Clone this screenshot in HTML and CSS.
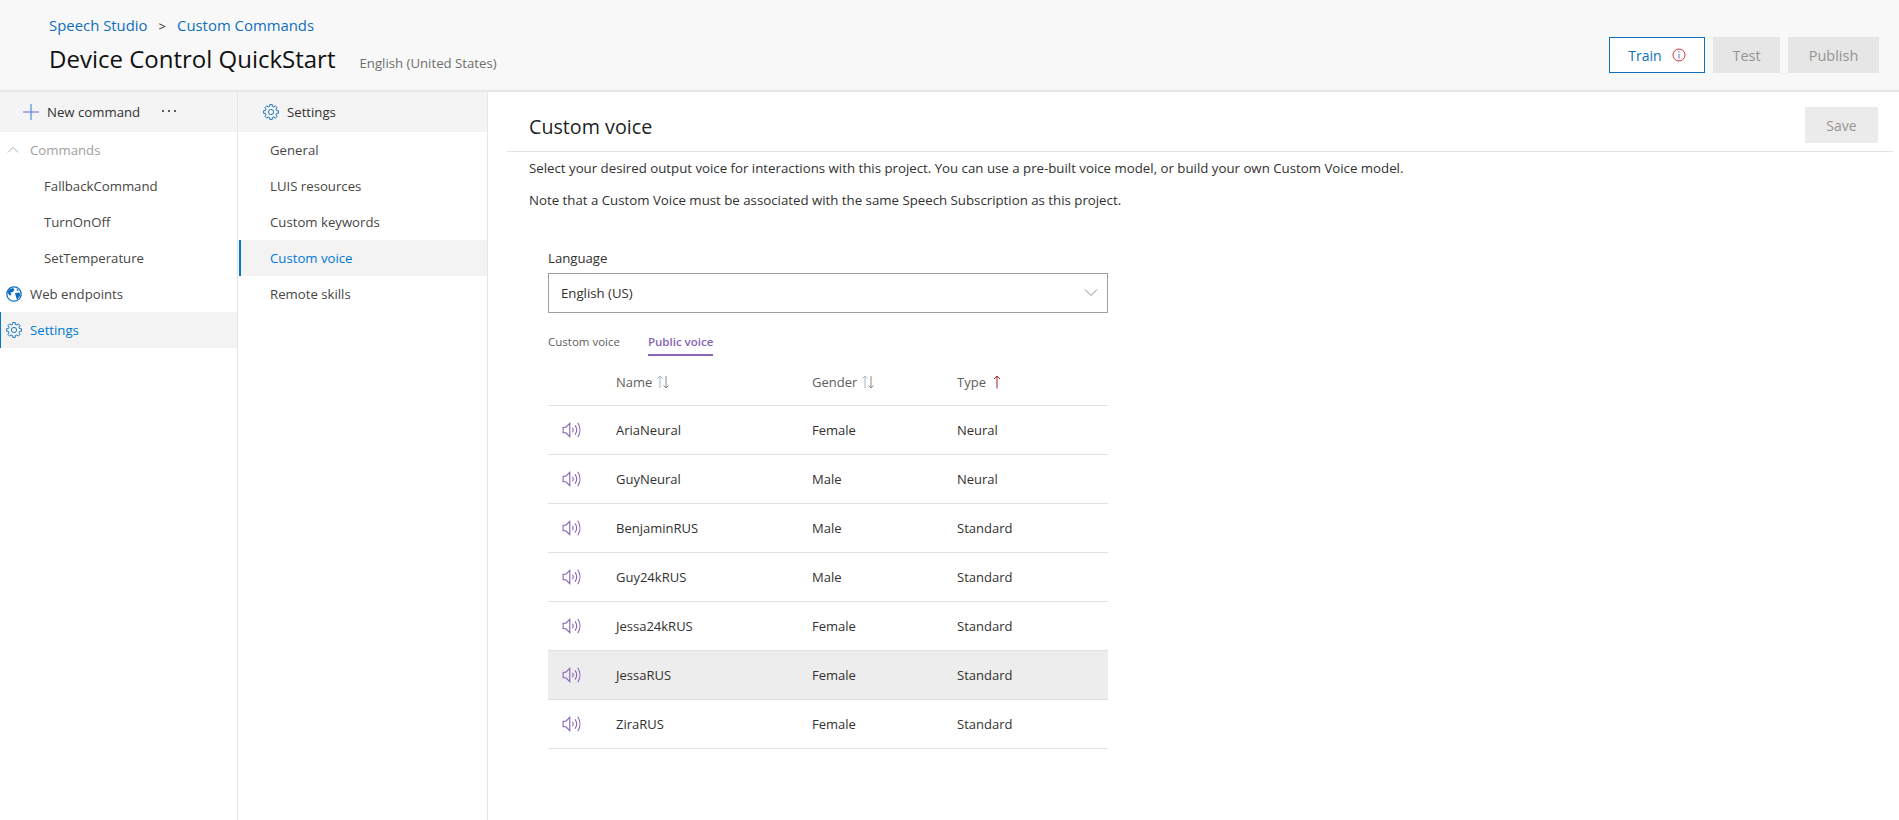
FILE: index.html
```html
<!doctype html>
<html lang="en">
  <head>
    <meta charset="UTF-8" />
    <title>Custom voice - Speech Studio</title>
    <link rel="stylesheet" href="styles.css">
  </head>
  <body>
    <svg class="defs">
      <defs>
        <path id="tooth" d="M6.62 2.47 6.7.6h2.6l.08 1.87A5.7 5.7 0 0 1 10.94 3.11"/>
        <symbol id="gear" viewBox="0 0 16 16">
          <g fill="none" stroke="currentColor" stroke-width=".9">
            <use href="#tooth"/>
            <use href="#tooth" transform="rotate(45 8 8)"/>
            <use href="#tooth" transform="rotate(90 8 8)"/>
            <use href="#tooth" transform="rotate(135 8 8)"/>
            <use href="#tooth" transform="rotate(180 8 8)"/>
            <use href="#tooth" transform="rotate(225 8 8)"/>
            <use href="#tooth" transform="rotate(270 8 8)"/>
            <use href="#tooth" transform="rotate(315 8 8)"/>
            <circle cx="8" cy="8" r="2.6"/>
          </g>
        </symbol>
        <symbol id="speaker" viewBox="0 0 18 16">
          <g fill="none" stroke="currentColor" stroke-width="1">
            <path d="M1 5.500h2.500L7 2v12l-3.500-3.500H1z"/>
            <path d="M9.500 6c.8 1.200.8 2.800 0 4"/>
            <path d="M11.800 3.800c1.700 2.500 1.700 5.900 0 8.400"/>
            <path d="M14.200 1.500c2.600 3.900 2.600 9.100 0 13"/>
          </g>
        </symbol>
        <symbol id="sort" viewBox="0 0 14 14">
          <g fill="none" stroke-width="1">
            <path stroke="#a6b8c4" d="M4 13V1M1.500 3.500 4 1l2.500 2.500"/>
            <path stroke="#8a8886" d="M10 1v12M7.500 10.500 10 13l2.500-2.500"/>
          </g>
        </symbol>
      </defs>
    </svg>

    <header class="header">
      <div class="header-left">
        <nav class="breadcrumb">
          <a>Speech Studio</a><span class="sep">&gt;</span><a>Custom Commands</a>
        </nav>
        <div class="project">
          <h1 class="project-title">Device Control QuickStart</h1>
          <span class="project-lang">English (United States)</span>
        </div>
      </div>
      <div class="header-actions">
        <button class="btn btn-outline">
          Train
          <svg class="info-icon" viewBox="0 0 14 14">
            <circle cx="7" cy="7" r="6" fill="none" stroke="#d13438"/>
            <path d="M7 6v4.500" stroke="#8661c5" stroke-width="1"/>
            <circle cx="7" cy="4" r=".7" fill="#8661c5"/>
          </svg>
        </button>
        <button class="btn btn-test">Test</button>
        <button class="btn btn-publish">Publish</button>
      </div>
    </header>

    <div class="layout">
      <aside class="nav">
        <div class="nav-top">
          <svg class="plus-icon" viewBox="0 0 16 16">
            <path d="M8 0v16" stroke="#2b7cd3"/>
            <path d="M0 8h16" stroke="#6b69d6"/>
          </svg>
          <span>New command</span>
          <span class="dots">
            <i></i><i></i><i></i>
          </span>
        </div>
        <div class="nav-item nav-muted">
          <svg class="chevron-up" viewBox="0 0 14 8">
            <path d="M1 7.500 7 1.500l6 6" fill="none" stroke="#a19f9d"/>
          </svg>
          Commands
        </div>
        <div class="nav-item nav-sub">FallbackCommand</div>
        <div class="nav-item nav-sub">TurnOnOff</div>
        <div class="nav-item nav-sub">SetTemperature</div>
        <div class="nav-item">
          <svg class="nav-icon" viewBox="0 0 16 16">
            <circle cx="8" cy="8" r="7.200" fill="#fff" stroke="#106ebe" stroke-width="1.300"/>
            <path fill="#106ebe" d="M3 3.500 7 2l1.500 1.500L7 6 4.500 6.500 5.500 9l-2 .5-2-3zM9 7l4.500-.5.800 3-3.300 4.500-1-3zM10.500 2.500l2.500 2-2 .5z"/>
          </svg>
          Web endpoints
        </div>
        <div class="nav-item nav-active">
          <svg class="nav-icon"><use href="#gear"/></svg>
          Settings
        </div>
      </aside>

      <aside class="subnav">
        <div class="subnav-top">
          <svg class="subnav-gear"><use href="#gear"/></svg>
          <span>Settings</span>
        </div>
        <div class="subnav-item">General</div>
        <div class="subnav-item">LUIS resources</div>
        <div class="subnav-item">Custom keywords</div>
        <div class="subnav-item subnav-active">Custom voice</div>
        <div class="subnav-item">Remote skills</div>
      </aside>

      <main class="main">
        <div class="main-head">
          <h2 class="main-title">Custom voice</h2>
          <button class="btn btn-save">Save</button>
        </div>
        <div class="intro">
          <p>Select your desired output voice for interactions with this project. You can use a pre-built voice model, or build your own Custom Voice model.</p>
          <p>Note that a Custom Voice must be associated with the same Speech Subscription as this project.</p>
        </div>

        <section class="voice-panel">
          <label class="field-label">Language</label>
          <div class="select">
            <span>English (US)</span>
            <svg class="chevron-down" viewBox="0 0 14 8">
              <path d="M1 .5l6 6 6-6" fill="none" stroke="#8a8886"/>
            </svg>
          </div>

          <div class="tabs">
            <span class="tab">Custom voice</span>
            <span class="tab tab-active">Public voice</span>
          </div>

          <div class="table">
            <div class="row row-head">
              <span></span>
              <span class="head-cell">Name <svg class="sort-icon"><use href="#sort"/></svg></span>
              <span class="head-cell">Gender <svg class="sort-icon"><use href="#sort"/></svg></span>
              <span class="head-cell">Type
                <svg class="sort-icon" viewBox="0 0 14 14"><path d="M7 13.500V1M4 4l3-3 3 3" fill="none" stroke="#a4262c"/></svg>
              </span>
            </div>
            <div class="row">
              <svg class="speaker"><use href="#speaker"/></svg><span>AriaNeural</span><span>Female</span><span>Neural</span>
            </div>
            <div class="row">
              <svg class="speaker"><use href="#speaker"/></svg><span>GuyNeural</span><span>Male</span><span>Neural</span>
            </div>
            <div class="row">
              <svg class="speaker"><use href="#speaker"/></svg><span>BenjaminRUS</span><span>Male</span><span>Standard</span>
            </div>
            <div class="row">
              <svg class="speaker"><use href="#speaker"/></svg><span>Guy24kRUS</span><span>Male</span><span>Standard</span>
            </div>
            <div class="row">
              <svg class="speaker"><use href="#speaker"/></svg><span>Jessa24kRUS</span><span>Female</span><span>Standard</span>
            </div>
            <div class="row row-selected">
              <svg class="speaker"><use href="#speaker"/></svg><span>JessaRUS</span><span>Female</span><span>Standard</span>
            </div>
            <div class="row">
              <svg class="speaker"><use href="#speaker"/></svg><span>ZiraRUS</span><span>Female</span><span>Standard</span>
            </div>
          </div>
        </section>
      </main>
    </div>
  </body>
</html>
```

FILE: styles.css
```css
* {
  margin: 0;
  padding: 0;
  box-sizing: border-box;
}

html,
body {
  height: 100%;
  overflow: hidden;
}

body {
  font-family: "Open Sans", "Noto Sans", sans-serif;
  font-size: 13.2px;
  color: #323130;
  background: white;
}

.defs {
  position: absolute;
  width: 0;
  height: 0;
}

.header {
  height: 92px;
  background: #f8f8f8;
  border-bottom: 2px solid #e6e6e6;
  display: flex;
  justify-content: space-between;
  padding: 15px 20px 0 49px;
}

.breadcrumb {
  font-size: 14.9px;
  line-height: 20px;
  color: #106ebe;
}

.breadcrumb .sep {
  color: #323130;
  margin: 0 11px 0 11px;
  font-size: 13px;
}

.project {
  display: flex;
  align-items: baseline;
  margin-top: 5px;
}

.project-title {
  font-size: 24px;
  font-weight: 400;
  line-height: 36px;
  color: #111;
}

.project-lang {
  margin-left: 24px;
  font-size: 13.2px;
  color: #6e6e6e;
}

.header-actions {
  display: flex;
  gap: 8px;
  padding-top: 22px;
}

.btn {
  height: 36px;
  border: none;
  font-family: inherit;
  font-size: 14.5px;
  background: #e6e6e6;
  color: #979593;
}

.btn-outline {
  width: 96px;
  background: white;
  border: 1px solid #106ebe;
  color: #106ebe;
  display: flex;
  align-items: center;
  justify-content: center;
  gap: 10px;
  font-size: 14px;
}

.info-icon {
  width: 14px;
  height: 14px;
}

.btn-test {
  width: 67px;
}

.btn-publish {
  width: 91px;
}

.layout {
  display: flex;
  height: calc(100vh - 92px);
}

.nav {
  width: 238px;
  flex-shrink: 0;
  border-right: 1px solid #e6e6e6;
}

.nav-top,
.subnav-top {
  height: 40px;
  background: #f4f4f4;
  display: flex;
  align-items: center;
  color: #323130;
}

.nav-top {
  padding-left: 23px;
  gap: 8px;
}

.plus-icon {
  width: 16px;
  height: 16px;
}

.dots {
  display: flex;
  gap: 4px;
  margin-left: 14px;
  margin-bottom: 2px;
}

.dots i {
  width: 2px;
  height: 2px;
  background: #605e5c;
}

.nav-item {
  height: 36px;
  display: flex;
  align-items: center;
  padding-left: 30px;
  color: #484644;
  position: relative;
}

.nav-muted {
  color: #a19f9d;
}

.chevron-up {
  position: absolute;
  left: 7px;
  top: 14px;
  width: 12px;
  height: 7px;
}

.nav-sub {
  padding-left: 44px;
}

.nav-icon {
  position: absolute;
  left: 6px;
  top: 10px;
  width: 16px;
  height: 16px;
  color: #106ebe;
}

.nav-active {
  background: #f3f3f3;
  color: #0078d4;
  border-left: 1px solid #0078d4;
  padding-left: 29px;
}

.nav-active .nav-icon {
  left: 5px;
}

.subnav {
  width: 250px;
  flex-shrink: 0;
  border-right: 1px solid #e6e6e6;
}

.subnav-top {
  padding-left: 25px;
  gap: 8px;
}

.subnav-gear {
  width: 16px;
  height: 16px;
  color: #106ebe;
}

.subnav-item {
  height: 36px;
  display: flex;
  align-items: center;
  padding-left: 32px;
  color: #484644;
}

.subnav-active {
  background: #f3f3f3;
  color: #0078d4;
  border-left: 2px solid #0078d4;
  padding-left: 29px;
  margin-left: 1px;
}

.main {
  flex: 1;
  padding: 0 6px 0 19px;
}

.main-head {
  height: 60px;
  border-bottom: 1px solid #e1e1e1;
  display: flex;
  justify-content: space-between;
  align-items: flex-start;
  padding: 15px 15px 0 22px;
}

.main-title {
  font-size: 19.7px;
  font-weight: 400;
  line-height: 40px;
  color: #201f1e;
}

.btn-save {
  width: 73px;
  background: #ebebeb;
  font-size: 14px;
}

.intro {
  padding: 7px 0 0 22px;
}

.intro p {
  line-height: 18px;
  margin-bottom: 14px;
  color: #323130;
  font-size: 13.25px;
}

.voice-panel {
  width: 560px;
  margin: 40px 0 0 41px;
}

.field-label {
  display: block;
  line-height: 18px;
  color: #323130;
}

.select {
  height: 40px;
  margin-top: 6px;
  border: 1px solid #a19f9d;
  display: flex;
  align-items: center;
  justify-content: space-between;
  padding: 0 9px 0 12px;
  color: #323130;
}

.chevron-down {
  width: 14px;
  height: 8px;
}

.tabs {
  display: flex;
  gap: 28px;
  margin-top: 20px;
  font-size: 11.5px;
  color: #605e5c;
}

.tab {
  height: 23px;
  line-height: 18px;
}

.tab-active {
  color: #8764b8;
  font-weight: 600;
  border-bottom: 2px solid #8764b8;
}

.row {
  display: grid;
  grid-template-columns: 68px 196px 145px 1fr;
  height: 49px;
  align-items: center;
  border-bottom: 1px solid #e1e1e1;
  font-size: 13px;
  color: #323130;
}

.row-head {
  height: 50px;
  padding-top: 3px;
  color: #605e5c;
}

.head-cell {
  display: flex;
  align-items: center;
  gap: 4px;
}

.sort-icon {
  width: 14px;
  height: 14px;
}

.row-selected {
  background: #ededed;
}

.speaker {
  width: 20px;
  height: 18px;
  margin-left: 14px;
  color: #8764b8;
}
```
